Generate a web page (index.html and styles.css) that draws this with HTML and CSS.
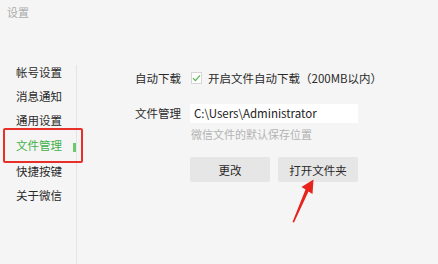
FILE: index.html
```html
<!DOCTYPE html>
<html lang="zh-CN">
<head>
<meta charset="utf-8">
<title>设置</title>
<link rel="stylesheet" href="styles.css">
</head>
<body>
<div class="window">
  <div class="title">设置</div>
  <div class="layout">
    <nav class="sidebar">
      <ul class="nav">
        <li class="nav-item">帐号设置</li>
        <li class="nav-item">消息通知</li>
        <li class="nav-item">通用设置</li>
        <li class="nav-item active">文件管理</li>
        <li class="nav-item">快捷按键</li>
        <li class="nav-item">关于微信</li>
      </ul>
    </nav>
    <main class="content">
      <div class="form">
        <div class="label row1">自动下载</div>
        <label class="check row1">
          <span class="box"><svg width="9" height="8" viewBox="0 0 9 8"><polyline points="1,4.2 3.4,6.6 8,1.4" fill="none" stroke="#52b552" stroke-width="1.2"/></svg></span>
          <span>开启文件自动下载（200MB以内）</span>
        </label>
        <div class="label row2">文件管理</div>
        <div class="path-field">
          <div class="input">C:\Users\Administrator</div>
          <div class="hint">微信文件的默认保存位置</div>
          <div class="buttons">
            <button class="btn">更改</button>
            <button class="btn">打开文件夹</button>
          </div>
        </div>
      </div>
    </main>
  </div>
  <svg class="arrow" width="438" height="264" viewBox="0 0 438 264">
    <polygon points="313.5,179.5 301.5,187 305.5,189.5 292.5,222 294,222.5 308.5,191.5 312.5,194" fill="#e8231c"/>
  </svg>
</div>
</body>
</html>
```

FILE: styles.css
```css
* { box-sizing: border-box; }
html, body {
  margin: 0;
  padding: 0;
}
body {
  width: 438px;
  height: 264px;
  overflow: hidden;
  background: #f5f5f5;
  font-family: "Noto Sans CJK SC", "Noto Sans", sans-serif;
  color: #2a2a2a;
  font-size: 11.5px;
}
.window {
  position: relative;
  width: 438px;
  height: 264px;
}
.title {
  height: 24px;
  padding: 5px 0 0 7px;
  font-size: 11px;
  line-height: 14px;
  color: #acacac;
}
.layout {
  display: flex;
  height: 240px;
}
.sidebar {
  width: 77px;
  margin-top: 41px;
  border-right: 1px solid #e4e4e4;
  flex-shrink: 0;
}
.nav {
  list-style: none;
  margin: -5px 0 0 0;
  padding: 0;
}
.nav-item {
  height: 24px;
  line-height: 24px;
  padding-left: 16px;
  color: #2a2a2a;
  position: relative;
}
.nav-item.active {
  height: 27px;
  line-height: 27px;
  color: #3fb24a;
}
.nav-item.active::before {
  content: "";
  position: absolute;
  left: 73px;
  top: 11px;
  width: 3px;
  height: 9px;
  background: #6cc96c;
}
.nav-item.active::after {
  content: "";
  position: absolute;
  left: 3px;
  top: -4px;
  width: 76px;
  height: 31px;
  border: 2px solid #e8302a;
  border-radius: 2px;
}
.content {
  flex: 1;
  padding: 44px 0 0 58px;
}
.form {
  display: grid;
  grid-template-columns: 55px auto;
  row-gap: 16px;
  align-items: start;
}
.label {
  line-height: 20px;
}
.row1 { height: 20px; }
.row2 { line-height: 19px; }
.check {
  display: flex;
  align-items: center;
  gap: 6px;
  padding-left: 1px;
}
.box {
  width: 11px;
  height: 12px;
  border: 1px solid #d6d6d6;
  background: #fff;
  display: flex;
  align-items: center;
  justify-content: center;
}
.path-field {
  display: flex;
  flex-direction: column;
}
.input {
  width: 168px;
  height: 19px;
  line-height: 19px;
  padding-left: 4px;
  background: #fff;
  font-size: 11.5px;
  color: #222;
}
.hint {
  margin-top: 4px;
  padding-left: 1px;
  line-height: 14px;
  font-size: 11px;
  color: #b3b3b3;
}
.buttons {
  margin-top: 16px;
  display: flex;
  gap: 8px;
}
.btn {
  width: 80px;
  height: 25px;
  border: none;
  border-radius: 2px;
  background: #e6e6e6;
  font-family: inherit;
  font-size: 11.5px;
  color: #2a2a2a;
  padding: 0;
}
.arrow {
  position: absolute;
  left: 0;
  top: 0;
  pointer-events: none;
}
```
